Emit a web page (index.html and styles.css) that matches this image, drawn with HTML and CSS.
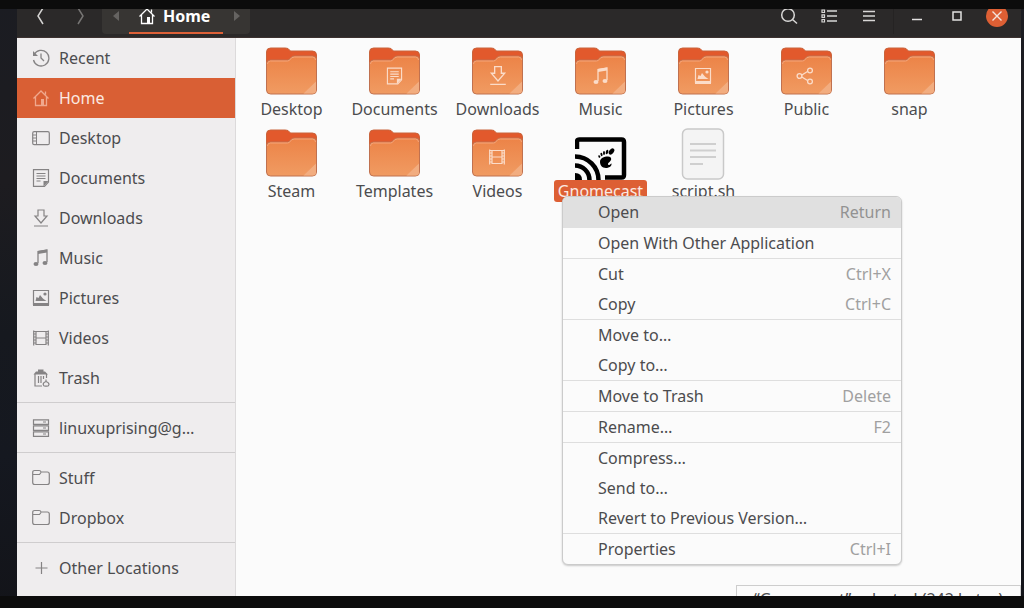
FILE: index.html
```html
<!DOCTYPE html>
<html lang="en">
<head>
<meta charset="utf-8">
<title>Home</title>
<link rel="stylesheet" href="styles.css">
</head>
<body>
<svg class="defs" width="0" height="0" aria-hidden="true">
  <defs>
    <linearGradient id="face" x1="0" y1="0" x2="0" y2="1"><stop offset="0" stop-color="#ec8347"/><stop offset="1" stop-color="#f09b62"/></linearGradient>
    <symbol id="folder" viewBox="0 0 52 52">
      <path d="M.5 12V6q0-4 4-4h15q3 0 4 2l1 1h22q4 0 4 4v10h-50z" fill="#e2592c" stroke="#c9643c"/>
      <path d="M.5 18q0-4 4-4h17q2 0 3-2t4-2h18q4 0 4 4v30q0 4-4 4h-42q-4 0-4-4z" fill="url(#face)" stroke="#c0714f"/>
      <path d="M1.500 18q0-3 3-3h17q2 0 3-2t4-2h18q3 0 3 3" fill="none" stroke="#f6a57a"/>
      <path d="M37.500 47.500 50 35.500v9q0 3-3 3z" fill="#f2ad80"/>
    </symbol>
    <symbol id="home" viewBox="0 0 18 18"><path d="M1.500 9.500 9 2l7.500 7.500M3.500 8v8.500h11V8M13.500 2.500v3" fill="none" stroke="currentColor" stroke-width="1.300"/><path d="M9 10h3v6.500H9z" fill="currentColor"/></symbol>
    <symbol id="recent" viewBox="0 0 18 18"><path d="M2.200 5.500A7.800 7.800 0 1 1 1.500 11M9 4.500V9l3 3" fill="none" stroke="currentColor" stroke-width="1.300"/><path d="M1 2v5h5z" fill="currentColor"/></symbol>
    <symbol id="desktop" viewBox="0 0 18 18"><rect x=".7" y="2.700" width="16.600" height="13" rx="1.500" fill="none" stroke="currentColor" stroke-width="1.200"/><path d="M4.500 3v12.500M1 6h3M1 9h3M1 12h3" stroke="currentColor"/></symbol>
    <symbol id="documents" viewBox="0 0 18 18"><path d="M1.500.700h15V13l-4 4.300h-11zM4.500 4.500h9M4.500 7h9M4.500 9.500h9M4.500 12h4" fill="none" stroke="currentColor" stroke-width="1.200"/><path d="M11.500 17.500V12h5z" fill="currentColor"/></symbol>
    <symbol id="downloads" viewBox="0 0 18 18"><path d="M6 1h6v6h3l-6 7-6-7h3zM2 17h14" fill="none" stroke="currentColor" stroke-width="1.200"/></symbol>
    <symbol id="music" viewBox="0 0 18 18"><path d="M6 14V2.500l9-1.500v12" fill="none" stroke="currentColor" stroke-width="1.300"/><path d="M6 2l9-1.500v3L6 5z" fill="currentColor"/><ellipse cx="4" cy="15" rx="2.500" ry="2" fill="currentColor"/><ellipse cx="13" cy="14" rx="2.500" ry="2" fill="currentColor"/></symbol>
    <symbol id="pictures" viewBox="0 0 18 18"><path d="M1.500 1.500h15v14h-15z" fill="none" stroke="currentColor" stroke-width="1.200"/><path d="M1 14h16v3H1zM3.500 12l1-4 2 1 1.500-3 2.500 3 1 1 3 2z" fill="currentColor"/><circle cx="13" cy="5" r="1.600" fill="currentColor"/></symbol>
    <symbol id="videos" viewBox="0 0 18 18"><path d="M4 2v14M14 2v14M4 2.500h10M4 9h10M4 15.500h10" stroke="currentColor" stroke-width="1.200"/><path d="M1.700 1.500v15M16.300 1.500v15" stroke="currentColor" stroke-width="1.200"/><path d="M1.500 2.500H4M1.500 5H4M1.500 8H4M1.500 11H4M1.500 14H4M14 2.500h2.500M14 5h2.500M14 8h2.500M14 11h2.500M14 14h2.500" stroke="currentColor"/></symbol>
    <symbol id="trash" viewBox="0 0 18 18"><path d="M3 5v12h7M14.500 5v4M6.500 7v7M9 7v7M11.500 7v3" fill="none" stroke="currentColor" stroke-width="1.200"/><path d="M1.500 5.500 4 2.500h9L16 5.500zM6 .5h5.500v2H6z" fill="currentColor"/><path d="M14 10.500v2q-3 1-2.800 3 .3 1.700 2 1.700h1.800q1.800 0 2-1.700 0-2-3-3" fill="none" stroke="currentColor" stroke-width="1.200"/></symbol>
    <symbol id="server" viewBox="0 0 18 18"><path d="M1.500.800h15v4.500h-15zM1.500 6.800h15v4.500h-15zM1.500 12.800h15v4.500h-15zM11 3h3M11 9h3M11 15h3" fill="none" stroke="currentColor" stroke-width="1.200"/></symbol>
    <symbol id="dir" viewBox="0 0 18 18"><path d="M.7 13.500v-10q0-2 2-2h4.500q1.500 0 1.800 1.500h6.300q2 0 2 2v8.500q0 2-2 2H2.700q-2 0-2-2zM1 5.500h6.500L9 3.500" fill="none" stroke="currentColor" stroke-width="1.200"/></symbol>
    <symbol id="plus" viewBox="0 0 18 18"><path d="M9.500 3v12M3.500 9h12" stroke="currentColor" stroke-width="1.200"/></symbol>
    <symbol id="share" viewBox="0 0 18 18"><path d="M5.500 8.200 11.500 4.500M5.500 9.800l6 3.700" stroke="currentColor" stroke-width="1.300"/><g fill="none" stroke="currentColor" stroke-width="1.300"><circle cx="3.500" cy="9" r="2.400"/><circle cx="14" cy="3.500" r="2.400"/><circle cx="14" cy="14.500" r="2.400"/></g></symbol>
  </defs>
</svg>

<div class="window">
  <header class="headerbar">
    <div class="bar">
      <button class="nav" aria-label="Back"><svg width="12" height="18"><path d="M8 1 3 9l5 8" fill="none" stroke="#d4d3d2" stroke-width="1.500"/></svg></button>
      <button class="nav" aria-label="Forward"><svg width="12" height="18"><path d="m3 1 5 8-5 8" fill="none" stroke="#777574" stroke-width="1.500"/></svg></button>
      <nav class="pathbar" aria-label="Path">
        <button class="step" aria-label="Scroll left"><svg width="6" height="10"><path d="M6 0v10L0 5z" fill="#656361"/></svg></button>
        <button class="crumb"><svg width="18" height="18"><use href="#home"/></svg>Home</button>
        <button class="step" aria-label="Scroll right"><svg width="6" height="10"><path d="M0 0v10l6-5z" fill="#656361"/></svg></button>
      </nav>
      <div class="tools">
        <button class="tool" aria-label="Search"><svg width="18" height="18"><circle cx="8" cy="8" r="6.300" fill="none" stroke="#d8d7d6" stroke-width="1.500"/><path d="m12.500 12.500 4.500 4" stroke="#d8d7d6" stroke-width="1.500"/></svg></button>
        <button class="tool" aria-label="View as list"><svg width="16" height="14"><path d="M6 2h10M6 7h10M6 12h10" stroke="#d8d7d6" stroke-width="1.500"/><path d="M1 1h2.500v2.500H1zM1 5.800h2.500v2.500H1zM1 10.500h2.500V13H1z" fill="none" stroke="#d8d7d6" stroke-width="1.200"/></svg></button>
        <button class="tool" aria-label="Menu"><svg width="12" height="12"><path d="M0 1.500h12M0 6h12M0 10.500h12" stroke="#d8d7d6" stroke-width="1.500"/></svg></button>
      </div>
      <div class="controls">
        <button class="tool" aria-label="Minimize"><svg width="10" height="10"><path d="M0 8.500h10" stroke="#e2e1e0" stroke-width="1.500"/></svg></button>
        <button class="tool" aria-label="Maximize"><svg width="10" height="10"><path d="M1 1h8v8H1z" fill="none" stroke="#e2e1e0" stroke-width="1.500"/></svg></button>
        <button class="tool" aria-label="Close"><svg width="22" height="22"><circle cx="11" cy="11" r="11" fill="#dd5f34"/><path d="m6.500 6.500 9 9m0-9-9 9" stroke="#f4e4dd" stroke-width="1.400"/></svg></button>
      </div>
    </div>
  </header>
  <div class="content">
    <aside class="sidebar">
      <a class="place" href="#"><svg width="18" height="18"><use href="#recent"/></svg>Recent</a>
      <a class="place current" href="#"><svg width="18" height="18"><use href="#home"/></svg>Home</a>
      <a class="place" href="#"><svg width="18" height="18"><use href="#desktop"/></svg>Desktop</a>
      <a class="place" href="#"><svg width="18" height="18"><use href="#documents"/></svg>Documents</a>
      <a class="place" href="#"><svg width="18" height="18"><use href="#downloads"/></svg>Downloads</a>
      <a class="place" href="#"><svg width="18" height="18"><use href="#music"/></svg>Music</a>
      <a class="place" href="#"><svg width="18" height="18"><use href="#pictures"/></svg>Pictures</a>
      <a class="place" href="#"><svg width="18" height="18"><use href="#videos"/></svg>Videos</a>
      <a class="place" href="#"><svg width="18" height="18"><use href="#trash"/></svg>Trash</a>
      <hr class="rule">
      <a class="place" href="#"><svg width="18" height="18"><use href="#server"/></svg>linuxuprising@g…</a>
      <hr class="rule">
      <a class="place" href="#"><svg width="18" height="18"><use href="#dir"/></svg>Stuff</a>
      <a class="place" href="#"><svg width="18" height="18"><use href="#dir"/></svg>Dropbox</a>
      <hr class="rule">
      <a class="place" href="#"><svg width="18" height="18"><use href="#plus"/></svg>Other Locations</a>
    </aside>
    <main class="files">
      <div class="grid">
        <div class="file"><svg width="52" height="52"><use href="#folder"/></svg><span class="name">Desktop</span></div>
        <div class="file"><svg class="emblem" width="52" height="52"><use href="#folder"/><use href="#documents" x="17" y="21" width="17" height="18"/></svg><span class="name">Documents</span></div>
        <div class="file"><svg class="emblem" width="52" height="52"><use href="#folder"/><use href="#downloads" x="16" y="19" width="20" height="21"/></svg><span class="name">Downloads</span></div>
        <div class="file"><svg class="emblem" width="52" height="52"><use href="#folder"/><use href="#music" x="17" y="21" width="18" height="18"/></svg><span class="name">Music</span></div>
        <div class="file"><svg class="emblem" width="52" height="52"><use href="#folder"/><use href="#pictures" x="16" y="21" width="18" height="18"/></svg><span class="name">Pictures</span></div>
        <div class="file"><svg class="emblem" width="52" height="52"><use href="#folder"/><use href="#share" x="15" y="21" width="18" height="18"/></svg><span class="name">Public</span></div>
        <div class="file"><svg width="52" height="52"><use href="#folder"/></svg><span class="name">snap</span></div>
        <div class="file"><svg width="52" height="52"><use href="#folder"/></svg><span class="name">Steam</span></div>
        <div class="file"><svg width="52" height="52"><use href="#folder"/></svg><span class="name">Templates</span></div>
        <div class="file"><svg class="emblem" width="52" height="52"><use href="#folder"/><use href="#videos" x="16" y="20" width="18" height="18"/></svg><span class="name">Videos</span></div>
        <div class="file selected"><svg width="52" height="52">
          <path d="M2 21v-7q0-2.500 2.500-2.500h42q2.500 0 2.500 2.500v33q0 2.500-2.500 2.500H30" fill="none" stroke="#000" stroke-width="4.500"/>
          <path d="M0 28.500a23.500 23.500 0 0 1 23.500 23.500M0 37.500a14.500 14.500 0 0 1 14.500 14.500" fill="none" stroke="#000" stroke-width="4.500"/>
          <path d="M0 45q7 0 7 7H0z"/>
          <path d="M25 34c0-4 4-5.500 8-5.500 4.500.5 3.500 4 1.500 5.500s-2 3-.5 3 1.500-1.500 2.500-1.500c.5 3-3 4.500-5.500 4.500-4 0-6-3-6-6z"/>
          <ellipse cx="36.500" cy="23.500" rx="2.200" ry="3.500" transform="rotate(40 36.500 23.500)"/><ellipse cx="32" cy="24" rx="1.200" ry="2.400" transform="rotate(15 32 24)"/><ellipse cx="29" cy="25" rx="1" ry="2"/><ellipse cx="26.500" cy="26.500" rx="1" ry="1.700" transform="rotate(-15 26.500 26.500)"/><ellipse cx="24.300" cy="28.500" rx=".9" ry="1.400" transform="rotate(-25 24.300 28.500)"/>
        </svg><span class="name">Gnomecast</span></div>
        <div class="file"><svg width="52" height="52"><rect x="4.500" y="1" width="41" height="50" rx="5" fill="#f4f4f4" stroke="#c9c9c9" stroke-width="1.500"/><path d="M12 16h26M12 22.500h26M12 29h26M12 36h13" stroke="#cfcfcf" stroke-width="2"/></svg><span class="name">script.sh</span></div>
      </div>
      <div class="status">“Gnomecast” selected (242 bytes)</div>
      <div class="menu" role="menu">
        <button class="item active" role="menuitem">Open<kbd>Return</kbd></button>
        <hr>
        <button class="item" role="menuitem">Open With Other Application</button>
        <hr>
        <button class="item" role="menuitem">Cut<kbd>Ctrl+X</kbd></button>
        <button class="item" role="menuitem">Copy<kbd>Ctrl+C</kbd></button>
        <hr>
        <button class="item" role="menuitem">Move to…</button>
        <button class="item" role="menuitem">Copy to…</button>
        <hr>
        <button class="item" role="menuitem">Move to Trash<kbd>Delete</kbd></button>
        <hr>
        <button class="item" role="menuitem">Rename…<kbd>F2</kbd></button>
        <hr>
        <button class="item" role="menuitem">Compress…</button>
        <button class="item" role="menuitem">Send to…</button>
        <button class="item" role="menuitem">Revert to Previous Version…</button>
        <hr>
        <button class="item" role="menuitem">Properties<kbd>Ctrl+I</kbd></button>
      </div>
    </main>
  </div>
</div>
</body>
</html>
```
FILE: styles.css
```css
* {
  box-sizing: border-box;
}

body {
  display: flex;
  height: 100vh;
  margin: 0;
  padding: 0 3px 0 17px;
  overflow: hidden;
  border: solid #0c0c0c;
  border-width: 9px 0 12px;
  background: linear-gradient(#1b1c22, #1d1c20 30%, #16191f 55%, #151820 75%, #131419);
  color: #4c4c4e;
  font: 16px/22px "Noto Sans", "Open Sans", sans-serif;
}

button {
  padding: 0;
  border: 0;
  background: none;
  color: inherit;
  font: inherit;
}

svg {
  display: block;
  flex: none;
}

.defs {
  position: absolute;
}

.window {
  display: flex;
  flex: 1;
  flex-direction: column;
  min-width: 0;
}

.headerbar {
  display: flex;
  flex: none;
  align-items: flex-end;
  height: 29px;
  overflow: hidden;
  border-bottom: 1px solid #3d3230;
  background: #2b2929;
}

.bar {
  display: flex;
  flex: 1;
  align-items: center;
  height: 42px;
  padding: 0 4px;
}

.nav,
.tool {
  display: grid;
  width: 40px;
  height: 36px;
  place-items: center;
}

.pathbar {
  display: flex;
  height: 36px;
  margin-left: 1px;
  border-radius: 4px;
  background: #373533;
}

.step {
  display: grid;
  width: 27px;
  place-items: center;
}

.crumb {
  display: flex;
  align-items: center;
  gap: 7px;
  padding: 2px 13px 0 9px;
  border-bottom: 2px solid #dd6037;
  color: #fff;
  font-weight: 700;
}

.tools,
.controls {
  display: flex;
}

.tools {
  margin-left: auto;
  padding-right: 4px;
}

.controls {
  padding-left: 3px;
  border-left: 1px solid #252323;
}

.content {
  display: flex;
  flex: 1;
  min-height: 0;
}

.sidebar {
  flex: none;
  width: 219px;
  overflow: hidden;
  border-right: 1px solid #dcdadb;
  background: #efedee;
}

.place {
  display: flex;
  align-items: center;
  gap: 9px;
  height: 40px;
  padding: 0 16px 0 15px;
  color: inherit;
  text-decoration: none;
  white-space: nowrap;
}

.place svg {
  color: #858384;
}

.place.current {
  background: #d95f34;
  color: #fbe9e2;
}

.place.current svg {
  color: #f0a88d;
}

.rule {
  height: 1px;
  margin: 4px 0 5px;
  border: 0;
  background: #cfcdce;
}

.files {
  position: relative;
  flex: 1;
  min-width: 0;
  overflow: hidden;
  background: #fbfbfb;
}

.grid {
  display: grid;
  grid-template-columns: repeat(auto-fill, 103px);
  padding: 8px 4px;
}

.file {
  display: flex;
  flex-direction: column;
  align-items: center;
  height: 82px;
}

.emblem {
  color: #fbdcc9;
}

.name {
  padding: 0 4px;
  border-radius: 3px;
  white-space: nowrap;
}

.selected .name {
  background: #dd5f34;
  color: #fbe9e2;
}

.status {
  position: absolute;
  right: 0;
  bottom: -17px;
  padding: 2px 17px;
  border: 1px solid #cdcdcd;
  background: #fbfbfb;
  white-space: nowrap;
}

.menu {
  position: absolute;
  top: 158px;
  left: 326px;
  width: 340px;
  overflow: hidden;
  border: 1px solid #cbcbcb;
  border-radius: 6px;
  background: #fbfbfb;
  box-shadow: 0 1px 2px rgb(0 0 0 / 20%);
}

.menu hr {
  height: 1px;
  margin: 0;
  border: 0;
  background: #dedede;
}

.item {
  display: flex;
  align-items: center;
  justify-content: space-between;
  width: 100%;
  height: 30px;
  padding: 0 10px 0 35px;
}

.item.active {
  background: #e0e0e0;
}

.item.active + hr {
  background: #e0e0e0;
}

.item kbd {
  color: #a0a0a0;
  font: inherit;
}

.active kbd {
  color: #929292;
}
```
